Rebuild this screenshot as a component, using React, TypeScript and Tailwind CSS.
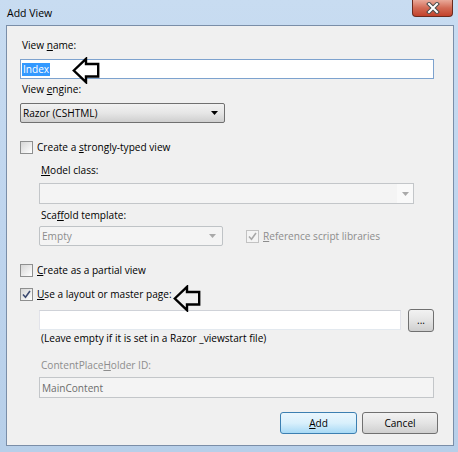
import React from "react";

function Arrow({ fill }: { fill: string }) {
  return (
    <svg width="28" height="27" viewBox="0 0 28 27">
      <polygon
        points="1.8,13.5 14,1.8 14,7 26.2,7 26.2,19.5 14,19.5 14,25.2"
        fill={fill}
        stroke="black"
        strokeWidth="2.4"
        strokeLinejoin="miter"
      />
    </svg>
  );
}

function Checkbox({ checked, disabled }: { checked?: boolean; disabled?: boolean }) {
  return (
    <div
      className={
        disabled
          ? "w-[13px] h-[13px] border border-[#c2c2c2] bg-[#f4f4f4] flex items-center justify-center shrink-0"
          : "w-[13px] h-[13px] border border-[#8e8f8f] bg-gradient-to-br from-[#d6d6d6] to-[#ffffff] flex items-center justify-center shrink-0"
      }
    >
      {checked && (
        <svg width="11" height="11" viewBox="0 0 11 11">
          <path
            d="M2 5.5 L4.5 8.2 L9 2"
            fill="none"
            stroke={disabled ? "#a8a8a8" : "#3c4a70"}
            strokeWidth="1.6"
          />
        </svg>
      )}
    </div>
  );
}

function Caret({ color }: { color: string }) {
  return (
    <svg width="7" height="4" viewBox="0 0 7 4">
      <polygon points="0,0 7,0 3.5,4" fill={color} />
    </svg>
  );
}

export default function App() {
  return (
    <div className="w-[458px] h-[452px] relative overflow-hidden bg-gradient-to-b from-[#c8dcf1] via-[#bfd5ee] to-[#b7cfe9] font-['Open_Sans',sans-serif] text-[10.1px] leading-[16px] text-black">
      {/* Title bar */}
      <div className="h-[25px] flex items-start">
        <div className="pl-[7px] pt-[5px] text-[10.5px] leading-[16px]">Add View</div>
      </div>
      <div className="absolute right-[5px] top-0 w-[41px] h-[17px] rounded-b-[4px] border border-t-0 border-[#6b2a1e] bg-gradient-to-b from-[#e9a99a] via-[#d26a55] to-[#c2412b] flex items-center justify-center">
        <svg width="14" height="12" viewBox="0 0 14 12">
          <path d="M3 2 L11 10 M11 2 L3 10" stroke="#4a4a4a" strokeWidth="4" strokeLinecap="square" />
          <path d="M3 2 L11 10 M11 2 L3 10" stroke="#ffffff" strokeWidth="2" strokeLinecap="square" />
        </svg>
      </div>

      {/* Client area */}
      <div className="ml-[6px] w-[448px] h-[421px] border border-[#7a8ea8] bg-[#f0f0f0] flex flex-col pl-[13px] pt-[11px]">
        {/* View name */}
        <div className="ml-[2px]">
          View <u>n</u>ame:
        </div>
        <div className="relative mt-[6px] w-[414px] h-[20px] border border-[#7da2ce] bg-white flex items-center pl-[1px]">
          <span className="bg-[#3399ff] text-white px-[1px] leading-[13px]">Index</span>
          <div className="absolute left-[51px] top-[-3px]">
            <Arrow fill="white" />
          </div>
        </div>

        {/* View engine */}
        <div className="ml-[2px] mt-[2px]">
          View <u>e</u>ngine:
        </div>
        <div className="mt-[6px] w-[205px] h-[20px] rounded-[2px] border border-[#707070] bg-gradient-to-b from-[#f2f2f2] via-[#e6e6e6] to-[#cfcfcf] flex items-center justify-between pl-[2px] pr-[6px]">
          <span>Razor (CSHTML)</span>
          <Caret color="#000" />
        </div>

        {/* Strongly typed */}
        <div className="mt-[16px] flex items-center gap-[4px] h-[16px]">
          <Checkbox />
          <span>
            Create a <u>s</u>trongly-typed view
          </span>
        </div>

        <div className="ml-[19px] flex flex-col">
          <div className="ml-[2px] mt-[7px]">
            <u>M</u>odel class:
          </div>
          <div className="mt-[5px] w-[375px] h-[21px] border border-[#c3c6c9] bg-[#f4f4f4] flex items-center justify-end">
            <div className="w-[16px] h-full bg-[#f9f9f9] flex items-center justify-center">
              <Caret color="#a9a9a9" />
            </div>
          </div>
          <div className="ml-[2px] mt-[3px]">
            Sca<u>ff</u>old template:
          </div>
          <div className="mt-[3px] flex items-center">
            <div className="w-[184px] h-[20px] rounded-[2px] border border-[#bfc3c6] bg-[#f4f4f4] flex items-center justify-between pl-[2px] pr-[6px] text-[#8d8d8d]">
              <span>Empty</span>
              <Caret color="#a9a9a9" />
            </div>
            <div className="ml-[23px] flex items-center gap-[4px] text-[#8d8d8d]">
              <Checkbox checked disabled />
              <span>
                <u>R</u>eference script libraries
              </span>
            </div>
          </div>
        </div>

        {/* Partial view */}
        <div className="mt-[16px] flex items-center gap-[4px] h-[16px]">
          <Checkbox />
          <span>
            <u>C</u>reate as a partial view
          </span>
        </div>

        {/* Layout */}
        <div className="relative mt-[8px] flex items-center gap-[4px] h-[16px]">
          <Checkbox checked />
          <span>
            <u>U</u>se a layout or master page:
          </span>
          <div className="absolute left-[153px] top-[-1px]">
            <Arrow fill="none" />
          </div>
        </div>

        <div className="ml-[19px] flex flex-col">
          <div className="mt-[8px] flex items-center">
            <div className="w-[362px] h-[20px] border border-t-[#cfd2d8] border-x-[#e2e3ea] border-b-[#e3e9ef] bg-white" />
            <div className="ml-[7px] -my-[2px] w-[26px] h-[23px] rounded-[3px] border border-[#707070] bg-gradient-to-b from-[#f2f2f2] via-[#e4e4e4] to-[#cfcfcf] flex items-center justify-center leading-[10px]">
              ...
            </div>
          </div>
          <div className="ml-[2px]">(Leave empty if it is set in a Razor _viewstart file)</div>
          <div className="ml-[2px] mt-[11px] text-[#8d8d8d]">
            ContentPlace<u>H</u>older ID:
          </div>
          <div className="mt-[4px] w-[395px] h-[21px] border border-[#c3c6c9] bg-[#f4f4f4] flex items-center pl-[2px] text-[#6d6d6d]">
            MainContent
          </div>
        </div>

        {/* Buttons */}
        <div className="mt-[14px] flex justify-end gap-[5px] pr-[15px]">
          <div className="w-[77px] h-[22px] rounded-[3px] border border-[#3c7fb1] bg-gradient-to-b from-[#eaf6fd] via-[#d9f0fc] to-[#a7d9f5] flex items-center justify-center">
            <span>
              <u>A</u>dd
            </span>
          </div>
          <div className="w-[76px] h-[22px] rounded-[3px] border border-[#707070] bg-gradient-to-b from-[#f2f2f2] via-[#e4e4e4] to-[#cfcfcf] flex items-center justify-center">
            Cancel
          </div>
        </div>
      </div>
    </div>
  );
}
